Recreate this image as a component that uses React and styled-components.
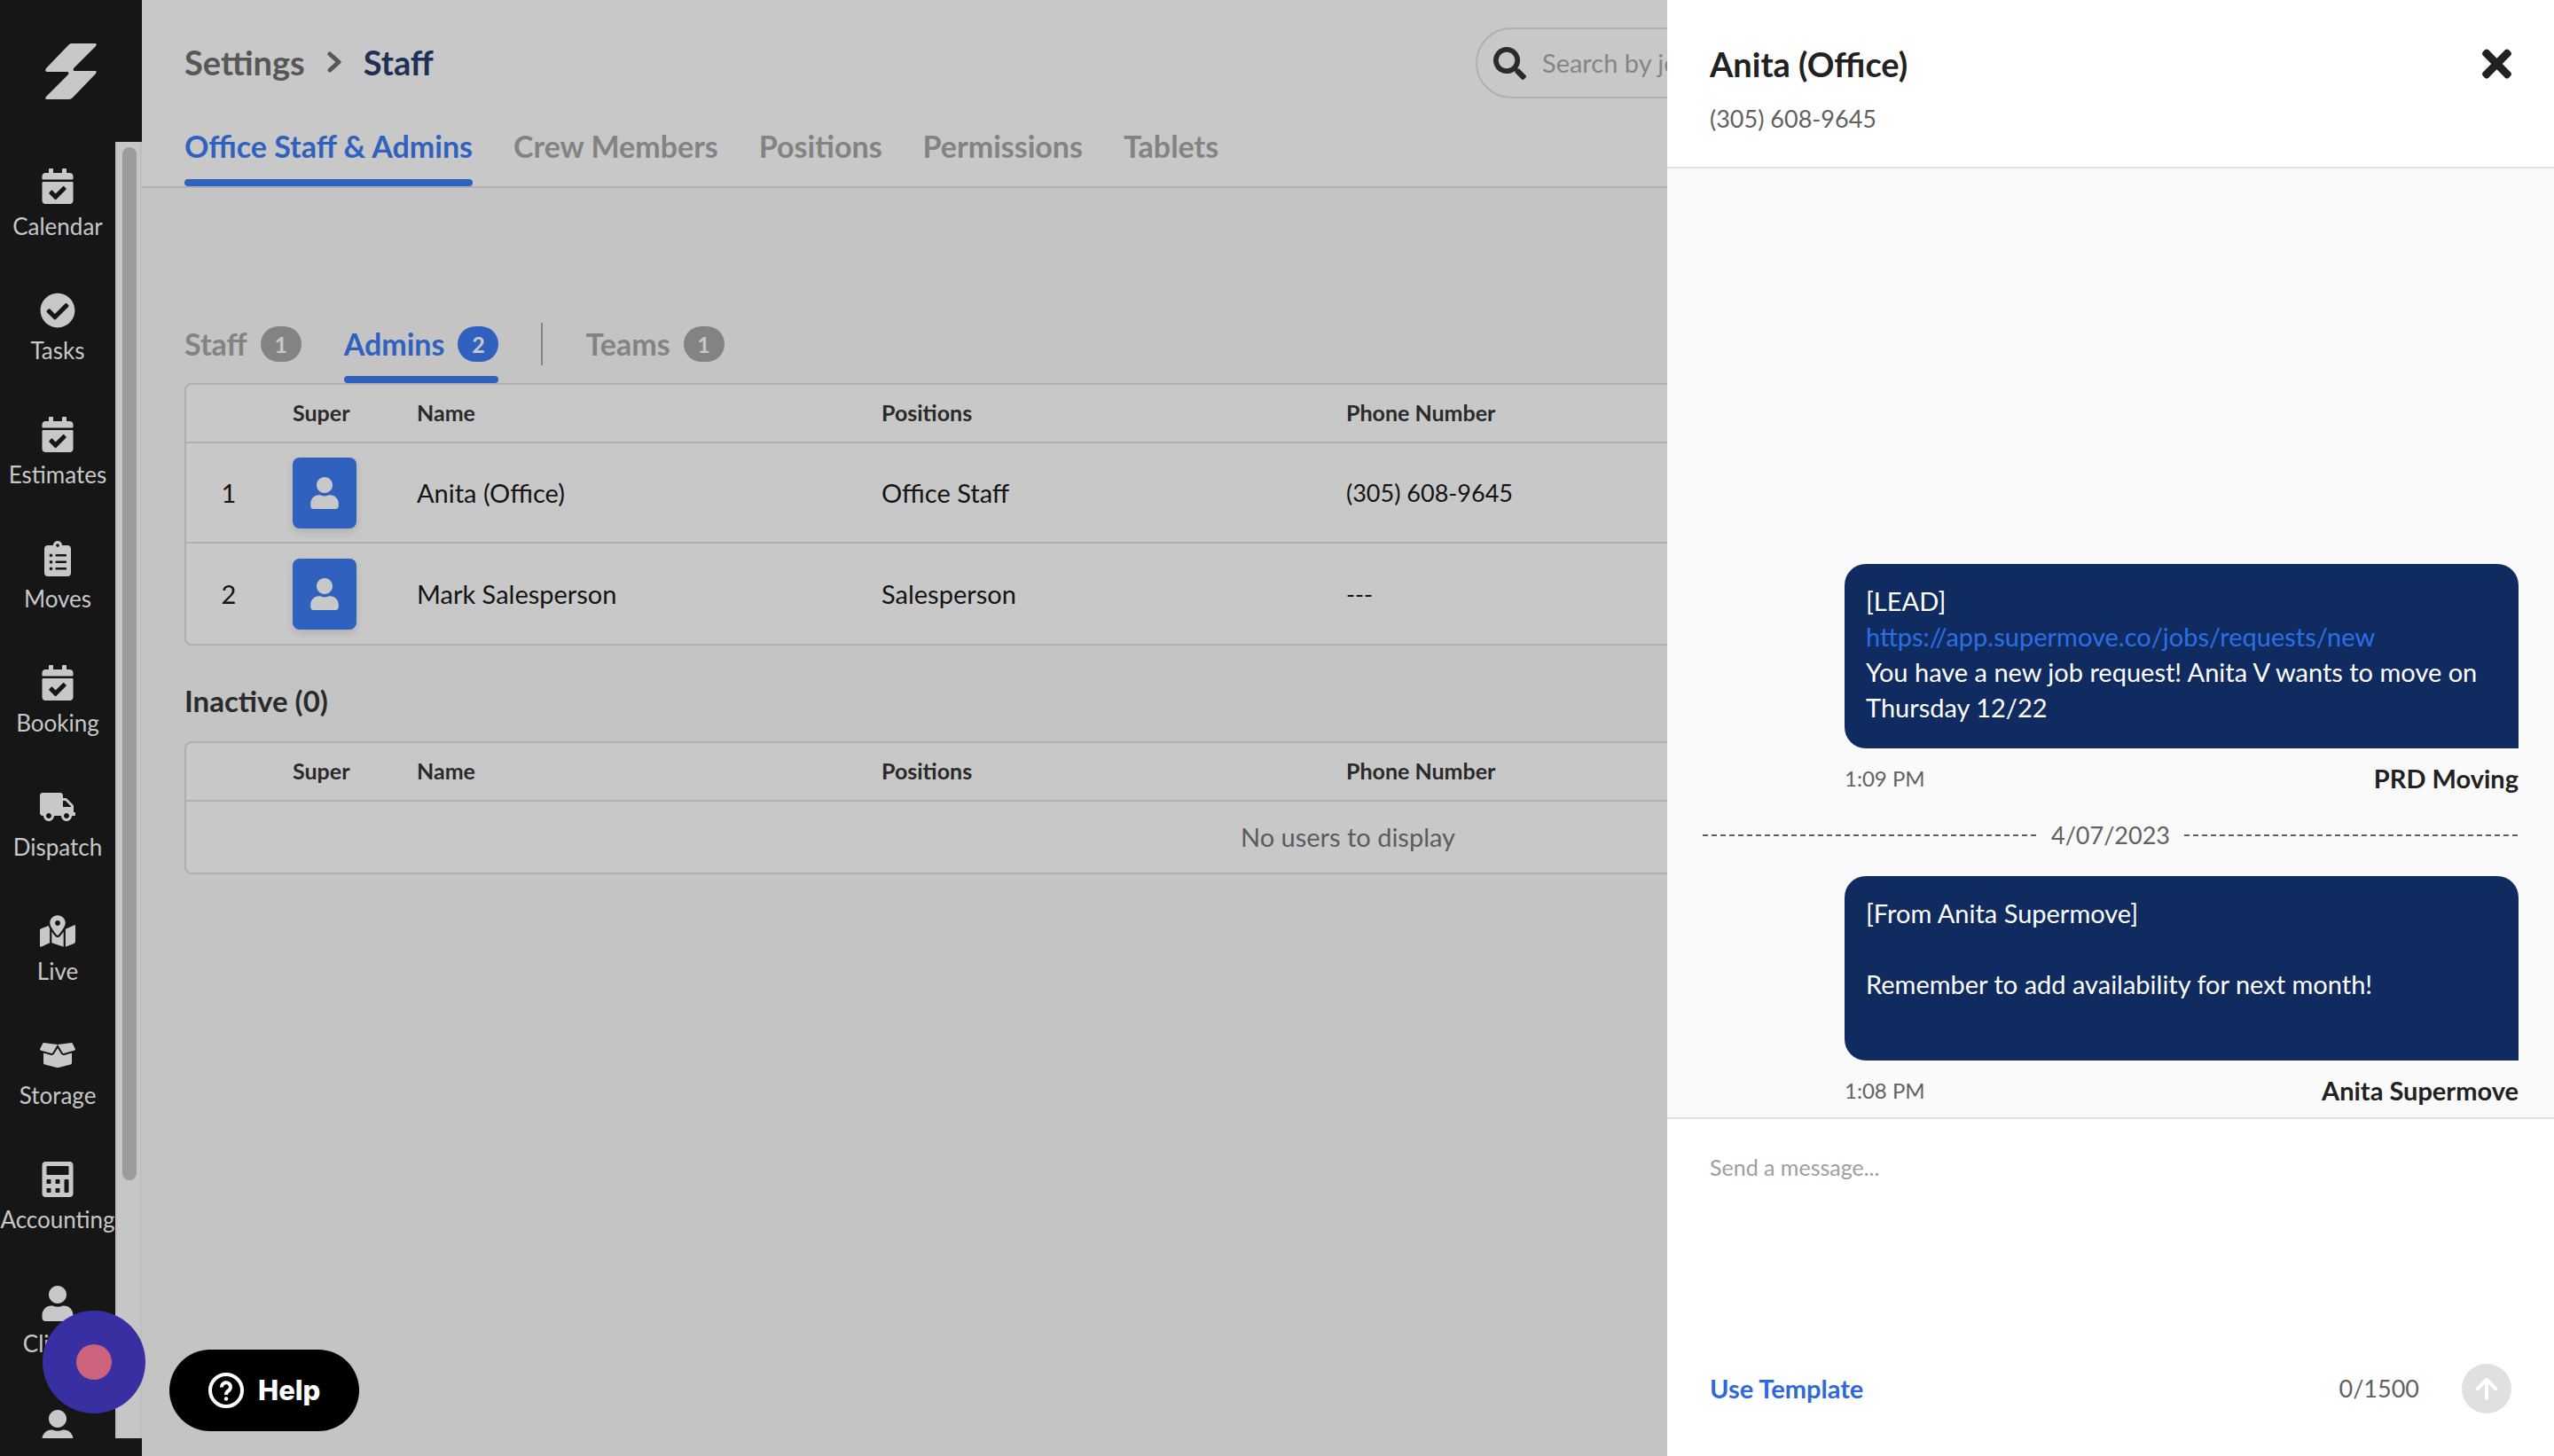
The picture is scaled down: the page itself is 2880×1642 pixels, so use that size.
import styled, { createGlobalStyle } from "styled-components";
import {
    FaBoxOpen,
    FaCalculator,
    FaCalendarCheck,
    FaCheckCircle,
    FaClipboardList,
    FaMapMarkedAlt,
    FaSearch,
    FaTimes,
    FaTruck,
    FaUser,
} from "react-icons/fa";

const GlobalStyle = createGlobalStyle`
    * {
        box-sizing: border-box;
    }

    body {
        margin: 0;
        background-color: #c4c4c4;
        font-family: Lato, "Open Sans", sans-serif;
        font-size: 29px;
        line-height: 40px;
        color: #141414;
    }

    button,
    input,
    textarea {
        font: inherit;
        color: inherit;
        border: none;
        background: none;
        padding: 0;
        margin: 0;
        outline: none;
    }

    a {
        text-decoration: none;
    }
`;

const Page = styled.div`
    display: flex;
    height: 100vh;
    overflow: hidden;
`;

/* Sidebar */

const Sidebar = styled.aside`
    display: flex;
    flex-direction: column;
    flex: 0 0 160px;
    padding-bottom: 20px;
    background-color: #161616;
    color: #c8c8c8;
`;

const LogoLink = styled.a`
    display: flex;
    align-items: center;
    justify-content: center;
    flex: 0 0 160px;
    color: inherit;
`;

const SidebarScroll = styled.div`
    display: flex;
    flex: 1;
    min-height: 0;
`;

const NavList = styled.nav`
    width: 130px;
    overflow: hidden;
`;

const NavItem = styled.a`
    display: flex;
    flex-direction: column;
    align-items: center;
    gap: 8px;
    height: 140px;
    padding-top: 30px;
    font-size: 26px;
    line-height: 34px;
    color: inherit;
`;

const ScrollTrack = styled.div`
    flex: 1;
    padding: 6px 4px 0 6px;
    background-color: #c6c6c6;
    border: solid #bfbfbf;
    border-width: 0 2px;
`;

const ScrollThumb = styled.div`
    width: 16px;
    height: 80%;
    border-radius: 8px;
    background-color: #9b9b9b;
`;

/* Main area */

const Main = styled.main`
    flex: 1;
    min-width: 0;
`;

const Header = styled.header`
    padding: 31px 48px 0;
    background-color: #c8c8c8;
    border-bottom: 2px solid #afafaf;
`;

const HeaderTop = styled.div`
    display: flex;
    align-items: center;
    justify-content: space-between;
`;

const Breadcrumbs = styled.div`
    display: flex;
    align-items: center;
    gap: 25px;
    padding-bottom: 2px;
    font-size: 38px;
    font-weight: 700;
    color: #1e3055;
`;

const BreadcrumbLink = styled.a`
    color: #575757;
`;

const SearchBox = styled.label`
    display: flex;
    align-items: center;
    gap: 18px;
    flex: 0 1 1168px;
    height: 80px;
    padding: 0 18px;
    border: 2px solid #afafaf;
    border-radius: 40px;
    color: #2a2a2a;
`;

const SearchInput = styled.input`
    flex: 1;

    &::placeholder {
        color: #858585;
        opacity: 1;
    }
`;

const Tabs = styled.div`
    display: flex;
    gap: 46px;
    padding-top: 34px;
`;

const Tab = styled.button`
    display: flex;
    flex-direction: column;
    gap: 17px;
    font-size: 34px;
    font-weight: 700;
    color: ${(props) => (props.$active ? "#3161bf" : "#838383")};

    &::after {
        content: "";
        width: 100%;
        height: 8px;
        border-radius: 4px;
        background-color: ${(props) => (props.$active ? "#3161bf" : "transparent")};
    }
`;

const Content = styled.section`
    padding: 152px 48px 0;
`;

const SubTabs = styled.div`
    display: flex;
    gap: 48px;
`;

const SubTab = styled(Tab)`
    gap: 12px;
`;

const SubTabLabel = styled.span`
    display: flex;
    align-items: center;
    gap: 15px;
    height: 48px;
`;

const Badge = styled.span`
    width: 46px;
    border-radius: 20px;
    font-size: 25px;
    text-align: center;
    color: #c8c8c8;
    background-color: ${(props) => (props.$active ? "#3161bf" : "#838383")};
`;

const Divider = styled.div`
    width: 2px;
    height: 48px;
    background-color: #838383;
`;

const SectionTitle = styled.h2`
    margin: 42px 0 26px;
    font-size: 33px;
    line-height: 40px;
    font-weight: 700;
    color: #2a2a2a;
`;

const Table = styled.table`
    width: 100%;
    table-layout: fixed;
    border: 2px solid #afafaf;
    border-radius: 8px;
    border-spacing: 0;
    background-color: #c8c8c8;
`;

const NumberCol = styled.col`
    width: 120px;
`;

const SuperCol = styled.col`
    width: 140px;
`;

const WideCol = styled.col`
    width: 20%;
`;

const HeadCell = styled.th`
    height: 66px;
    padding: 0 0 2px;
    border-bottom: 2px solid #afafaf;
    font-size: 25px;
    text-align: left;
    color: #2a2a2a;
`;

const Row = styled.tr`
    &:not(:last-child) > td {
        border-bottom: 2px solid #afafaf;
    }
`;

const Cell = styled.td`
    height: ${(props) => (props.$empty ? "80px" : "113px")};
    padding: 0;
    font-size: ${(props) => (props.$numeric ? "27px" : "inherit")};
    text-align: ${(props) => (props.$empty ? "center" : "left")};
    color: ${(props) => (props.$empty ? "#5c5c5c" : "inherit")};
`;

const NumberCell = styled(Cell)`
    padding-right: 24px;
    text-align: center;
`;

const SuperButton = styled.button`
    display: flex;
    align-items: center;
    justify-content: center;
    width: 72px;
    height: 80px;
    border-radius: 8px;
    background-color: #3161bf;
    color: #c8c8c8;
    box-shadow: 0 4px 8px rgba(0, 0, 0, 0.12);
`;

/* Floating buttons */

const RecordButton = styled.button`
    position: fixed;
    left: 48px;
    bottom: 48px;
    display: flex;
    align-items: center;
    justify-content: center;
    width: 116px;
    height: 116px;
    border-radius: 50%;
    background-color: #372fa2;
`;

const RecordDot = styled.span`
    width: 40px;
    height: 40px;
    border-radius: 50%;
    background-color: #cd627c;
`;

const HelpButton = styled.button`
    position: fixed;
    left: 191px;
    bottom: 28px;
    display: flex;
    align-items: center;
    gap: 16px;
    height: 92px;
    padding: 0 44px;
    border-radius: 46px;
    background-color: #000000;
    color: #ffffff;
    font-family: Inter, sans-serif;
    font-size: 31px;
    font-weight: 800;
`;

/* Message drawer */

const Drawer = styled.aside`
    position: fixed;
    top: 0;
    right: 0;
    bottom: 0;
    display: flex;
    flex-direction: column;
    width: 1000px;
    max-width: 100%;
    background-color: #ffffff;
`;

const DrawerHeader = styled.header`
    display: flex;
    justify-content: space-between;
    align-items: flex-start;
    padding: 48px 48px 34px;
    border-bottom: 2px solid #e0e0e0;
`;

const DrawerTitle = styled.h1`
    margin: 0 0 18px;
    font-size: 38px;
    line-height: 48px;
    font-weight: 700;
    color: #212121;
`;

const DrawerPhone = styled.div`
    font-size: 27px;
    color: #616161;
`;

const CloseButton = styled.button`
    display: flex;
    color: #212121;

    svg {
        width: 33px;
        height: 48px;
    }
`;

const Messages = styled.div`
    display: flex;
    flex-direction: column;
    justify-content: flex-end;
    flex: 1;
    padding: 0 40px 12px;
    background-color: #fafafa;
`;

const Message = styled.article`
    align-self: flex-end;
    width: 760px;
`;

const Bubble = styled.div`
    min-height: 208px;
    padding: 22px 24px 26px;
    border-radius: 24px 24px 0 24px;
    background-color: #102b60;
    color: #ffffff;
    white-space: pre-line;
`;

const BubbleLink = styled.a`
    color: #2b6fe6;
`;

const Meta = styled.div`
    display: flex;
    align-items: center;
    justify-content: space-between;
    margin-top: 16px;
    line-height: 36px;
`;

const Time = styled.time`
    font-size: 24px;
    color: #616161;
`;

const Sender = styled.span`
    font-weight: 700;
    color: #212121;
`;

const DateRow = styled.div`
    display: flex;
    align-items: center;
    gap: 16px;
    margin: 26px 0;
    font-size: 27px;
    color: #616161;
`;

const Dashes = styled.div`
    flex: 1;
    height: 2px;
    background: repeating-linear-gradient(
        to right,
        #616161 0 6px,
        transparent 6px 10px
    );
`;

const Composer = styled.form`
    padding: 34px 48px 48px;
    border-top: 2px solid #e0e0e0;
`;

const MessageInput = styled.textarea`
    display: block;
    width: 100%;
    height: 242px;
    font-size: 25px;
    resize: none;

    &::placeholder {
        color: #9e9e9e;
        opacity: 1;
    }
`;

const ComposerActions = styled.div`
    display: flex;
    align-items: center;
    gap: 48px;
`;

const TemplateButton = styled.button`
    margin-right: auto;
    font-weight: 700;
    color: #2f68d8;
`;

const Counter = styled.span`
    font-size: 27px;
    color: #616161;
`;

const SendButton = styled.button`
    display: flex;
    align-items: center;
    justify-content: center;
    width: 56px;
    height: 56px;
    border-radius: 50%;
    background-color: #e0e0e0;
    color: #ffffff;
`;

const navItems = [
    { label: "Calendar", icon: FaCalendarCheck },
    { label: "Tasks", icon: FaCheckCircle },
    { label: "Estimates", icon: FaCalendarCheck },
    { label: "Moves", icon: FaClipboardList },
    { label: "Booking", icon: FaCalendarCheck },
    { label: "Dispatch", icon: FaTruck },
    { label: "Live", icon: FaMapMarkedAlt },
    { label: "Storage", icon: FaBoxOpen },
    { label: "Accounting", icon: FaCalculator },
    { label: "Clients", icon: FaUser },
    { label: "", icon: FaUser },
];

const tabs = [
    "Office Staff & Admins",
    "Crew Members",
    "Positions",
    "Permissions",
    "Tablets",
];

const admins = [
    { name: "Anita (Office)", position: "Office Staff", phone: "(305) 608-9645" },
    { name: "Mark Salesperson", position: "Salesperson", phone: "---" },
];

const Logo = () => (
    <svg width="58" height="63" viewBox="0 0 58 63" fill="currentColor">
        <path d="M27 1Q28 0 30 0H56Q59 0 57 3L32 28Q31 31 33 31H56Q59 31 57 34L31 61Q29 63 27 63H2Q-1 63 1 60L26 35Q27 32 25 32H2Q-1 32 1 28Z" />
    </svg>
);

const Chevron = () => (
    <svg width="16" height="24" viewBox="0 0 16 24" fill="none" stroke="#575757" strokeWidth="5" strokeLinecap="round" strokeLinejoin="round">
        <path d="M3 3L13 12L3 21" />
    </svg>
);

const HelpIcon = () => (
    <svg width="40" height="40" viewBox="0 0 40 40" fill="none" stroke="currentColor" strokeWidth="4">
        <circle cx="20" cy="20" r="18" />
        <path d="M15 16.500a5 5 0 1 1 7.500 4c-1.800 1.200-2.500 2.200-2.500 4.500" />
        <circle cx="20" cy="29.500" r="2.200" fill="currentColor" stroke="none" />
    </svg>
);

const SendIcon = () => (
    <svg width="28" height="28" viewBox="0 0 28 28" fill="none" stroke="currentColor" strokeWidth="4" strokeLinecap="round" strokeLinejoin="round">
        <path d="M14 25V4M4 14L14 4L24 14" />
    </svg>
);

const UserTable = ({ users }) => (
    <Table>
        <colgroup>
            <NumberCol />
            <SuperCol />
            <WideCol />
            <WideCol />
            <WideCol />
            <col />
        </colgroup>
        <thead>
            <tr>
                <HeadCell />
                <HeadCell>Super</HeadCell>
                <HeadCell>Name</HeadCell>
                <HeadCell>Positions</HeadCell>
                <HeadCell>Phone Number</HeadCell>
                <HeadCell />
            </tr>
        </thead>
        <tbody>
            {users.length === 0 && (
                <Row>
                    <Cell $empty colSpan={6}>
                        No users to display
                    </Cell>
                </Row>
            )}
            {users.map((user, index) => (
                <Row key={user.name}>
                    <NumberCell>{index + 1}</NumberCell>
                    <Cell>
                        <SuperButton aria-label={`Super user: ${user.name}`}>
                            <FaUser size={36} />
                        </SuperButton>
                    </Cell>
                    <Cell>{user.name}</Cell>
                    <Cell>{user.position}</Cell>
                    <Cell $numeric>{user.phone}</Cell>
                    <Cell />
                </Row>
            ))}
        </tbody>
    </Table>
);

const MessageItem = ({ time, sender, children }) => (
    <Message>
        <Bubble>{children}</Bubble>
        <Meta>
            <Time>{time}</Time>
            <Sender>{sender}</Sender>
        </Meta>
    </Message>
);

const App = () => {
    return (
        <Page>
            <GlobalStyle />
            <Sidebar>
                <LogoLink href="#home" aria-label="Home">
                    <Logo />
                </LogoLink>
                <SidebarScroll>
                    <NavList>
                        {navItems.map(({ label, icon: Icon }, index) => (
                            <NavItem href="#nav" key={index}>
                                <Icon size={40} />
                                {label}
                            </NavItem>
                        ))}
                    </NavList>
                    <ScrollTrack>
                        <ScrollThumb />
                    </ScrollTrack>
                </SidebarScroll>
            </Sidebar>

            <Main>
                <Header>
                    <HeaderTop>
                        <Breadcrumbs>
                            <BreadcrumbLink href="#settings">Settings</BreadcrumbLink>
                            <Chevron />
                            <span>Staff</span>
                        </Breadcrumbs>
                        <SearchBox>
                            <FaSearch size={37} />
                            <SearchInput aria-label="Search" placeholder="Search by job name" />
                        </SearchBox>
                    </HeaderTop>
                    <Tabs>
                        {tabs.map((tab, index) => (
                            <Tab key={tab} $active={index === 0}>
                                {tab}
                            </Tab>
                        ))}
                    </Tabs>
                </Header>
                <Content>
                    <SubTabs>
                        <SubTab>
                            <SubTabLabel>
                                Staff <Badge>1</Badge>
                            </SubTabLabel>
                        </SubTab>
                        <SubTab $active>
                            <SubTabLabel>
                                Admins <Badge $active>2</Badge>
                            </SubTabLabel>
                        </SubTab>
                        <Divider />
                        <SubTab>
                            <SubTabLabel>
                                Teams <Badge>1</Badge>
                            </SubTabLabel>
                        </SubTab>
                    </SubTabs>
                    <UserTable users={admins} />
                    <SectionTitle>Inactive (0)</SectionTitle>
                    <UserTable users={[]} />
                </Content>
            </Main>

            <RecordButton aria-label="Record">
                <RecordDot />
            </RecordButton>
            <HelpButton>
                <HelpIcon />
                Help
            </HelpButton>

            <Drawer>
                <DrawerHeader>
                    <div>
                        <DrawerTitle>Anita (Office)</DrawerTitle>
                        <DrawerPhone>(305) 608-9645</DrawerPhone>
                    </div>
                    <CloseButton aria-label="Close">
                        <FaTimes />
                    </CloseButton>
                </DrawerHeader>
                <Messages>
                    <MessageItem time="1:09 PM" sender="PRD Moving">
                        {"[LEAD]\n"}
                        <BubbleLink href="#request">
                            https://app.supermove.co/jobs/requests/new
                        </BubbleLink>
                        {"\nYou have a new job request! Anita V wants to move on Thursday 12/22"}
                    </MessageItem>
                    <DateRow>
                        <Dashes />
                        4/07/2023
                        <Dashes />
                    </DateRow>
                    <MessageItem time="1:08 PM" sender="Anita Supermove">
                        {"[From Anita Supermove]\n\nRemember to add availability for next month!"}
                    </MessageItem>
                </Messages>
                <Composer>
                    <MessageInput aria-label="Message" placeholder="Send a message..." />
                    <ComposerActions>
                        <TemplateButton type="button">Use Template</TemplateButton>
                        <Counter>0/1500</Counter>
                        <SendButton type="button" aria-label="Send">
                            <SendIcon />
                        </SendButton>
                    </ComposerActions>
                </Composer>
            </Drawer>
        </Page>
    );
};

export default App;
